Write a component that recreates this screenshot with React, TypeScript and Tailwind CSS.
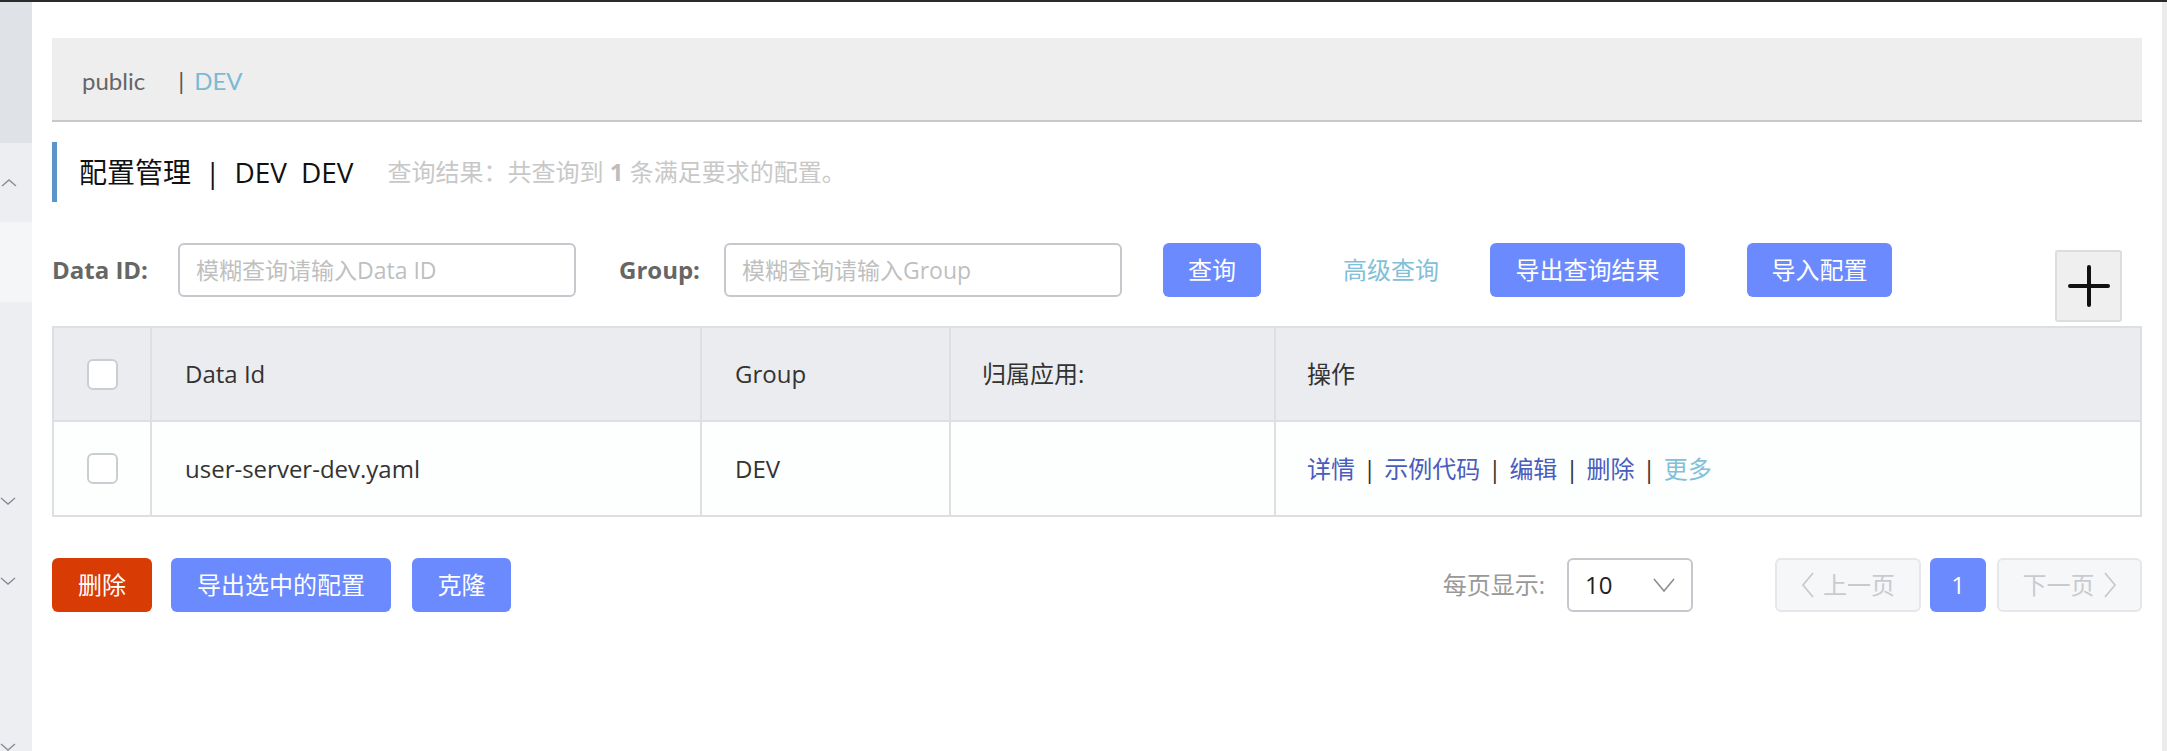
import React from 'react';

const sans = "font-['Open_Sans','Noto_Sans_CJK_SC',sans-serif]";

function Chevron({ up }: { up?: boolean }) {
  return (
    <svg width="16" height="10" viewBox="0 0 16 10" className="text-[#8a8d93]">
      {up ? (
        <polyline points="1,8 8,2 15,8" fill="none" stroke="currentColor" strokeWidth="1.4" />
      ) : (
        <polyline points="1,2 8,8 15,2" fill="none" stroke="currentColor" strokeWidth="1.4" />
      )}
    </svg>
  );
}

function Checkbox() {
  return <span className="block w-[31px] h-[31px] rounded-[6px] border-2 border-[#cbcdd3] bg-white"></span>;
}

function PrimaryButton({ label, w }: { label: string; w: string }) {
  return (
    <button className={`h-[54px] ${w} rounded-[6px] bg-[#6b8afd] text-white text-[24px] ${sans} flex items-center justify-center`}>
      {label}
    </button>
  );
}

export default function App() {
  return (
    <div className={`w-[2167px] h-[751px] overflow-hidden bg-white ${sans}`}>
      <div className="h-[2px] bg-[#2b2b2b]"></div>
      <div className="flex h-[749px]">
        {/* 侧边栏 */}
        <aside className="w-[32px] shrink-0 flex flex-col bg-[#eceef1]">
          <div className="h-[141px] bg-[#dfe2e7]"></div>
          <div className="h-[79px] flex items-center pl-[1px]">
            <Chevron up />
          </div>
          <div className="h-[80px] bg-[#f5f6f8]"></div>
          <div className="flex-1 relative">
            <div className="absolute left-[0px] top-[194px]"><Chevron /></div>
            <div className="absolute left-[0px] top-[274px]"><Chevron /></div>
            <div className="absolute left-[0px] top-[440px]"><Chevron /></div>
          </div>
        </aside>

        {/* 主体 */}
        <main className="flex-1 px-[20px] pt-[36px]">
          <div className="h-[84px] bg-[#eeeeee] border-b-2 border-[#c9c9c9] flex items-center pl-[30px] pt-[4px] font-['Lato',sans-serif] text-[24px]">
            <span className="text-[#666666]">public</span>
            <span className="ml-[33px] text-[#555555]">|</span>
            <span className="ml-[10px] text-[#7bbad4]">DEV</span>
          </div>

          <div className="mt-[20px] h-[60px] border-l-[5px] border-[#5b95c9] pl-[22px] flex items-center">
            <span className="text-[28px] text-[#111111]">配置管理</span>
            <span className="text-[28px] text-[#111111] ml-[14px]">|</span>
            <span className="text-[28px] text-[#111111] ml-[14px]">DEV</span>
            <span className="text-[28px] text-[#111111] ml-[14px]">DEV</span>
            <span className="text-[24px] text-[#c8c8c8] ml-[34px]">
              查询结果：共查询到 <b className="text-[#bdbdbd]">1</b> 条满足要求的配置。
            </span>
          </div>

          {/* 查询条件 */}
          <div className="mt-[41px] h-[79px] flex items-start">
            <div className="h-[54px] flex items-center">
              <span className="text-[24px] font-bold text-[#666666] w-[101px]">Data ID:</span>
              <div className="ml-[25px] w-[398px] h-[54px] rounded-[6px] border-2 border-[#c6c8ce] flex items-center pl-[16px] text-[23px] text-[#bfbfbf]">
                模糊查询请输入Data ID
              </div>
              <span className="ml-[43px] text-[24px] font-bold text-[#666666]">Group:</span>
              <div className="ml-[24px] w-[398px] h-[54px] rounded-[6px] border-2 border-[#c6c8ce] flex items-center pl-[16px] text-[23px] text-[#bfbfbf]">
                模糊查询请输入Group
              </div>
              <div className="ml-[41px]"><PrimaryButton label="查询" w="w-[98px]" /></div>
              <span className="ml-[82px] text-[24px] text-[#82c0d8]">高级查询</span>
              <div className="ml-[51px]"><PrimaryButton label="导出查询结果" w="w-[195px]" /></div>
              <div className="ml-[62px]"><PrimaryButton label="导入配置" w="w-[145px]" /></div>
            </div>
            <button className="ml-auto mr-[20px] mt-[7px] w-[67px] h-[72px] bg-[#efefef] border-2 border-[#dddddd] rounded-[3px] flex items-center justify-center">
              <svg width="42" height="42" viewBox="0 0 42 42">
                <line x1="21" y1="2" x2="21" y2="40" stroke="#111111" strokeWidth="4" strokeLinecap="round" />
                <line x1="2" y1="21" x2="40" y2="21" stroke="#111111" strokeWidth="4" strokeLinecap="round" />
              </svg>
            </button>
          </div>

          {/* 表格 */}
          <div className="mt-[4px] border-2 border-[#dedfe3] text-[24px] text-[#333333]">
            <div className="grid grid-cols-[98px_550px_249px_325px_1fr] h-[94px] bg-[#ebecf0] border-b-2 border-[#dedfe3]">
              <div className="flex items-center justify-center border-r-2 border-[#dedfe3]"><Checkbox /></div>
              <div className="flex items-center pl-[33px] border-r-2 border-[#dedfe3]">Data Id</div>
              <div className="flex items-center pl-[33px] border-r-2 border-[#dedfe3]">Group</div>
              <div className="flex items-center pl-[31px] border-r-2 border-[#dedfe3]">归属应用:</div>
              <div className="flex items-center pl-[31px]">操作</div>
            </div>
            <div className="grid grid-cols-[98px_550px_249px_325px_1fr] h-[93px] bg-[#fdfefe]">
              <div className="flex items-center justify-center border-r-2 border-[#dedfe3]"><Checkbox /></div>
              <div className="flex items-center pl-[33px] border-r-2 border-[#dedfe3]">user-server-dev.yaml</div>
              <div className="flex items-center pl-[33px] border-r-2 border-[#dedfe3]">DEV</div>
              <div className="border-r-2 border-[#dedfe3]"></div>
              <div className="flex items-center pl-[31px]">
                <span className="text-[#4a5cbd]">详情</span>
                <span className="mx-[8px] text-[#333333]">|</span>
                <span className="text-[#4a5cbd]">示例代码</span>
                <span className="mx-[8px] text-[#333333]">|</span>
                <span className="text-[#4a5cbd]">编辑</span>
                <span className="mx-[8px] text-[#333333]">|</span>
                <span className="text-[#4a5cbd]">删除</span>
                <span className="mx-[8px] text-[#333333]">|</span>
                <span className="text-[#82c0d8]">更多</span>
              </div>
            </div>
          </div>

          {/* 底部操作 */}
          <div className="mt-[41px] h-[54px] flex items-center">
            <button className="h-[54px] w-[100px] rounded-[6px] bg-[#d93b04] text-white text-[24px]">删除</button>
            <div className="ml-[19px]"><PrimaryButton label="导出选中的配置" w="w-[220px]" /></div>
            <div className="ml-[21px]"><PrimaryButton label="克隆" w="w-[99px]" /></div>

            <span className="ml-auto text-[24px] text-[#999999]">每页显示:</span>
            <div className="ml-[22px] w-[126px] h-[54px] rounded-[6px] border-2 border-[#c6c8ce] flex items-center pl-[16px] pr-[16px] justify-between">
              <span className="text-[24px] text-[#222222]">10</span>
              <svg width="22" height="14" viewBox="0 0 22 14">
                <polyline points="1,1 11,13 21,1" fill="none" stroke="#8a8d93" strokeWidth="1.6" />
              </svg>
            </div>

            <div className="ml-[82px] flex items-center">
              <div className="w-[146px] h-[54px] rounded-[6px] border-2 border-[#e6e7eb] bg-[#f6f7f9] flex items-center justify-center gap-[8px] text-[24px] text-[#c8cad0]">
                <svg width="14" height="26" viewBox="0 0 14 26">
                  <polyline points="12,1 2,13 12,25" fill="none" stroke="#c8cad0" strokeWidth="1.8" />
                </svg>
                上一页
              </div>
              <div className="ml-[9px] w-[56px] h-[54px] rounded-[6px] bg-[#6b8afd] text-white text-[24px] flex items-center justify-center">1</div>
              <div className="ml-[11px] w-[145px] h-[54px] rounded-[6px] border-2 border-[#e6e7eb] bg-[#f6f7f9] flex items-center justify-center gap-[8px] text-[24px] text-[#c8cad0]">
                下一页
                <svg width="14" height="26" viewBox="0 0 14 26">
                  <polyline points="2,1 12,13 2,25" fill="none" stroke="#c8cad0" strokeWidth="1.8" />
                </svg>
              </div>
            </div>
          </div>
        </main>

        <div className="w-[5px] shrink-0 bg-[#ececec]"></div>
      </div>
    </div>
  );
}
